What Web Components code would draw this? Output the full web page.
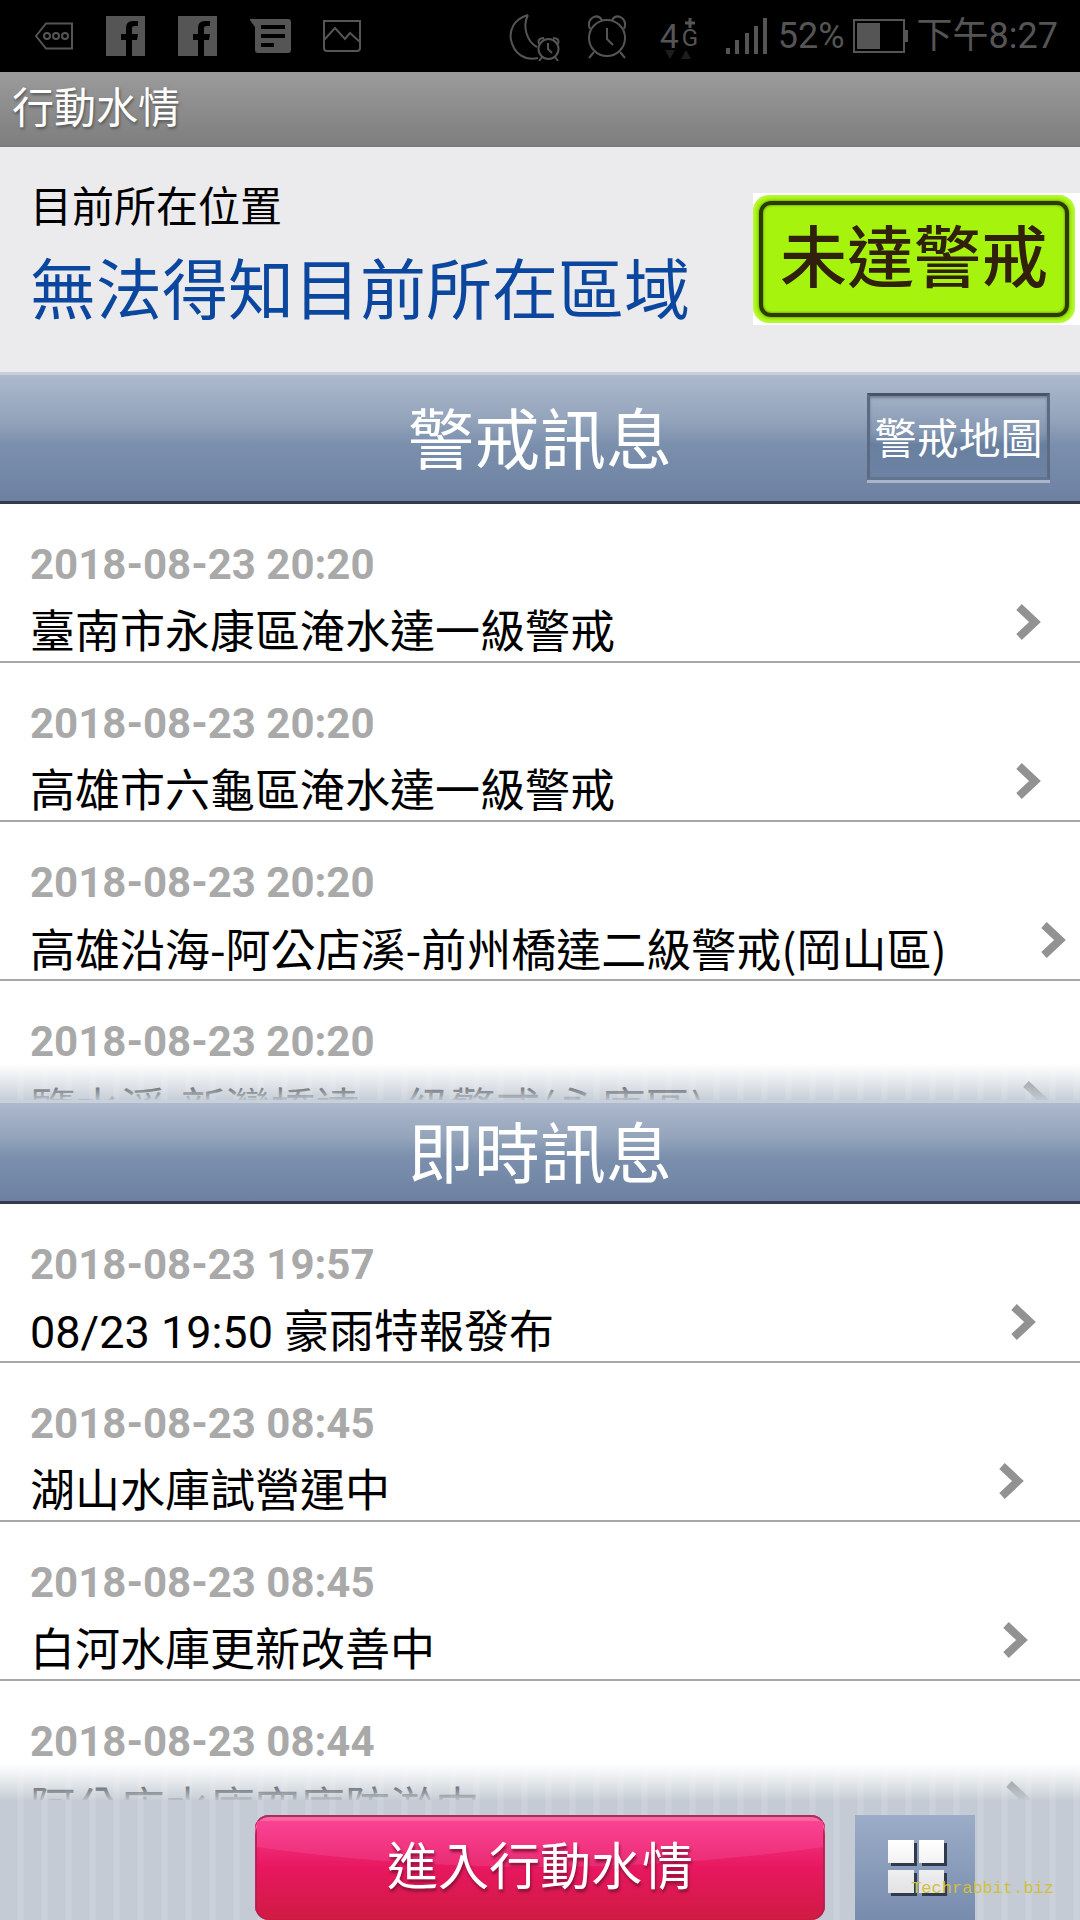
<!DOCTYPE html>
<html lang="zh-Hant">
<head>
<meta charset="utf-8">
<meta name="viewport" content="width=device-width, initial-scale=1">
<title>行動水情</title>
<style>
  html, body { margin: 0; height: 100%; }
  body {
    font-family: Roboto, "Noto Sans CJK TC", sans-serif;
    color: #000;
    background: #fff;
    --pad: 30px;
    --stripes: repeating-linear-gradient(90deg, #c4cbd4 0 17px, #cad1d9 18px 23px, #c4cbd4 24px);
  }
</style>
</head>
<body>
<water-app>
  <phone-status slot="status"></phone-status>
  <app-title slot="title">行動水情</app-title>
  <location-panel slot="location">
    <span slot="label">目前所在位置</span>
    <span slot="area">無法得知目前所在區域</span>
    <alert-badge slot="badge">未達警戒</alert-badge>
  </location-panel>

  <news-section>
    <section-bar slot="bar" tall>警戒訊息<map-button slot="action">警戒地圖</map-button></section-bar>
    <news-item time="2018-08-23 20:20">臺南市永康區淹水達一級警戒</news-item>
    <news-item time="2018-08-23 20:20">高雄市六龜區淹水達一級警戒</news-item>
    <news-item time="2018-08-23 20:20" cjk>高雄沿海-阿公店溪-前州橋達二級警戒(岡山區)</news-item>
    <news-item time="2018-08-23 20:20" cjk>鹽水溪-新灣橋達一級警戒(永康區)</news-item>
  </news-section>

  <news-section>
    <section-bar slot="bar">即時訊息</section-bar>
    <news-item time="2018-08-23 19:57">08/23 19:50 豪雨特報發布</news-item>
    <news-item time="2018-08-23 08:45">湖山水庫試營運中</news-item>
    <news-item time="2018-08-23 08:45">白河水庫更新改善中</news-item>
    <news-item time="2018-08-23 08:44">阿公店水庫空庫防淤中</news-item>
  </news-section>

  <app-footer slot="footer">進入行動水情<span slot="mark">Techrabbit.biz</span></app-footer>
</water-app>

<script>
const define = (name, html, setup) => {
  const template = document.createElement('template');
  template.innerHTML = html;
  customElements.define(name, class extends HTMLElement {
    constructor() {
      super();
      this.attachShadow({ mode: 'open' }).append(template.content.cloneNode(true));
    }
    connectedCallback() { if (setup) setup(this, this.shadowRoot); }
  });
};

define('water-app', `
  <style>
    :host { display: flex; flex-direction: column; height: 100vh; overflow: hidden; }
    main { flex: 1; min-height: 0; display: flex; flex-direction: column; }
  </style>
  <slot name="status"></slot>
  <slot name="title"></slot>
  <slot name="location"></slot>
  <main><slot></slot></main>
  <slot name="footer"></slot>
`);

define('phone-status', `
  <style>
    :host {
      display: flex; justify-content: space-between; align-items: center;
      height: 72px; padding: 0 22px 0 34px; box-sizing: border-box;
      background: #000; color: #555; font-size: 36px; line-height: 76px; font-weight: 400;
    }
    div { display: flex; align-items: center; }
    .left { gap: 32px; }
    .right { gap: 8px; }
    svg { display: block; fill: none; stroke: #555; stroke-width: 2; }
    .solid { fill: #555; stroke: none; }
    .moon { margin-right: 18px; }
    .alarm { margin-right: 25px; }
    .signal { margin-right: 2px; }
    .net { position: relative; width: 48px; height: 72px; font-size: 34px; margin-right: 10px; }
    .net b { font-size: 24px; font-weight: 400; margin-left: 3px; padding-top: 4px; }
    .net svg { position: absolute; left: 0; top: 0; }
  </style>
  <div class="left">
    <svg width="40" height="40" viewBox="0 0 40 40"><path d="M2 20 12 7.500H38V32.500H12Z"/><circle cx="13" cy="20" r="3"/><circle cx="22" cy="20" r="3"/><circle cx="31" cy="20" r="3"/></svg>
    <svg class="solid" width="40" height="40" viewBox="0 0 40 40"><path d="M0 0H39V40H26V24H31L32 18H26V12Q26 10 29 10H32V5H27Q20 5 20 12V18H15V24H20V40H0Z"/></svg>
    <svg class="solid" width="40" height="40" viewBox="0 0 40 40"><path d="M0 0H39V40H26V24H31L32 18H26V12Q26 10 29 10H32V5H27Q20 5 20 12V18H15V24H20V40H0Z"/></svg>
    <svg class="solid" width="42" height="40" viewBox="1 0 42 40"><path fill-rule="evenodd" d="M0 3H39Q42 3 42 6V34Q42 37 39 37H9Q6 37 6 34V11ZM12 9V13H36V9ZM12 18V22H36V18ZM12 27V31H25V27Z"/></svg>
    <svg width="40" height="40" viewBox="2 0 40 40" overflow="visible"><path d="M2 5H38V32Q38 35 35 35H5Q2 35 2 32ZM2 24 13 12 23 23 28 17 38 26"/></svg>
  </div>
  <div class="right">
    <svg class="moon" width="52" height="50" viewBox="0 0 52 50"><path d="M19 4C5 8 0 19 2 29 5 43 16 50 29 47M19 4C13 15 18 31 28 36"/><circle cx="39.500" cy="38" r="10"/><path d="M30 33Q28 27 35 27M49 33Q51 27 44 27M39 32V38L43 42M33 46 30 50M46 46 49 50"/></svg>
    <svg class="alarm" width="40" height="46" viewBox="0 0 40 46"><circle cx="20" cy="25" r="18"/><path d="M3 16Q0 9 5 5 11 1 15 7M37 16Q40 9 35 5 29 1 25 7M20 15V26L26 32M7 39 2 45M33 39 38 45"/></svg>
    <div class="net"><span>4</span><b>G</b><svg width="48" height="72" viewBox="0 0 48 72"><path d="M30 18V28M25 23H35" stroke-width="3"/><path d="M5 50H15L10 59ZM21 59 26 50 31 59Z" fill="#1d1d1d" stroke="none"/></svg></div>
    <svg class="signal solid" width="42" height="36" viewBox="0 0 42 36"><path d="M0 30H4V36H0ZM9 22H13V36H9ZM19 15H23V36H19ZM28 8H32V36H28ZM37 0H41V36H37Z"/></svg>
    <span>52%</span>
    <svg width="56" height="36" viewBox="0 0 56 36"><path d="M1 2H51V34H1Z"/><path class="solid" d="M4 5H27V31H4ZM52 12H55V24H52Z"/></svg>
    <span>下午8:27</span>
  </div>
`);

define('app-title', `
  <style>
    :host {
      display: block; padding: 0 12px; background: linear-gradient(#9b9b9b, #7e7e7e);
      border-bottom: 1px solid #777; color: #fff;
    }
    h1 { margin: 0; font-size: 42px; line-height: 74px; font-weight: 400; text-shadow: 1px 2px 3px #555; }
  </style>
  <h1><slot></slot></h1>
`);

define('location-panel', `
  <style>
    :host {
      display: flex; justify-content: space-between; align-items: flex-start;
      padding: 31px 0 26px var(--pad); background: #ebebed;
    }
    .label { font-size: 42px; line-height: 60px; }
    .area { font-size: 66px; line-height: 108px; color: #0b469f; white-space: nowrap; }
    .badge { padding-top: 15px; }
  </style>
  <div>
    <div class="label"><slot name="label"></slot></div>
    <div class="area"><slot name="area"></slot></div>
  </div>
  <div class="badge"><slot name="badge"></slot></div>
`);

define('alert-badge', `
  <style>
    :host { display: block; background: #fff; padding: 2px 5px 2px 0; }
    .plate { background: #a6f40e; border-radius: 16px; padding: 6px; box-shadow: inset 0 0 4px #d4fa8a; }
    .frame {
      border: 4px solid #2c3a04; border-radius: 12px; padding: 0 17px;
      font-size: 67px; line-height: 108px; font-weight: 500; color: #30200c; white-space: nowrap;
      box-shadow: 0 0 3px #557a08, inset 0 0 3px #557a08;
    }
  </style>
  <div class="plate"><div class="frame"><slot></slot></div></div>
`);

define('section-bar', `
  <style>
    :host {
      display: grid; grid-template-columns: 1fr auto 1fr; align-items: center;
      height: 104px; box-sizing: border-box; padding: 0 var(--pad);
      border-top: 3px solid #c8d0dc; border-bottom: 3px solid #343a4d;
      background: linear-gradient(#adb9cd, #94a4bb 35%, #7b90ad 55%, #6d80a2); color: #fff;
    }
    :host([tall]) { height: 132px; }
    h2 { grid-column: 2; margin: 0; padding-top: 8px; font-size: 66px; line-height: 90px; font-weight: 400; }
    .action { justify-self: end; }
  </style>
  <h2><slot></slot></h2>
  <div class="action"><slot name="action"></slot></div>
`);

define('map-button', `
  <style>
    :host { display: block; padding-bottom: 4px; }
    button {
      display: block; margin: 0; padding: 6px 4px 0; font: inherit; font-size: 42px; line-height: 75px; color: #fff;
      background: linear-gradient(#a3b1c5, #8497b2 45%, #68809f 60%, #6d82a5);
      border: 3px solid #5c6b82; border-top-color: #485467; border-bottom-color: #64758f;
      box-shadow: 0 3px 0 #a9b6ca, inset 0 2px 3px #71809a; white-space: nowrap; width: 183px;
    }
  </style>
  <button type="button"><slot></slot></button>
`);

define('news-section', `
  <style>
    :host { flex: 1 1 auto; display: flex; flex-direction: column; min-height: 0; }
    .list { flex: 1 1 0; min-height: 0; overflow: hidden; position: relative; background: #fff; }
    .fade {
      position: absolute; left: 0; right: 0; bottom: 0; height: 36px; pointer-events: none;
      background: var(--stripes);
      -webkit-mask-image: linear-gradient(transparent, rgba(0,0,0,.55) 60%, rgba(0,0,0,.95));
      mask-image: linear-gradient(transparent, rgba(0,0,0,.55) 60%, rgba(0,0,0,.95));
    }
  </style>
  <slot name="bar"></slot>
  <div class="list">
    <div role="list"><slot></slot></div>
    <div class="fade"></div>
  </div>
`);

define('news-item', `
  <style>
    :host { display: block; border-bottom: 2px solid #a8a8a8; }
    a {
      display: block; height: 157px; box-sizing: border-box;
      padding: 36px 6px 0 var(--pad); color: inherit; text-decoration: none;
    }
    time { display: block; font-size: 42px; line-height: 50px; font-weight: 700; color: #a9a9a9; }
    .row { display: flex; height: 71px; }
    .text { flex: 25 0 auto; font-size: 45px; line-height: 86px; white-space: nowrap; }
    :host([cjk]) .text { font-family: "Noto Sans CJK TC", sans-serif; line-height: 80px; }
    .go { flex: 2 0 auto; padding-top: 13px; }
    svg { display: block; }
  </style>
  <a href="#">
    <time></time>
    <div class="row">
      <span class="text"><slot></slot></span>
      <span class="go"><svg width="27" height="38" viewBox="0 0 27 38"><path d="M4 4 20 19 4 34" fill="none" stroke="#929292" stroke-width="8"/></svg></span>
    </div>
  </a>
`, (host, root) => {
  host.setAttribute('role', 'listitem');
  root.querySelector('time').textContent = host.getAttribute('time');
});

define('app-footer', `
  <style>
    :host {
      display: grid; grid-template-columns: 1fr 570px 1fr; position: relative;
      padding-top: 15px; background: var(--stripes);
    }
    button { display: block; margin: 0; padding: 0; border: 0; height: 105px; font: inherit; color: #fff; }
    .enter {
      grid-column: 2; border-radius: 14px; font-size: 51px; line-height: 105px; text-shadow: 1px 3px 3px #8a1238;
      background: linear-gradient(#f9408f, #e81760 50%, #cf1b42);
      box-shadow: inset 0 2px 0 #a52f5c, inset 0 6px 1px #f9689f, inset 2px 0 1px #b81f50, inset -2px 0 1px #b81f50;
      position: relative; overflow: hidden;
    }
    .shine { position: absolute; inset: 6px 2px auto 2px; width: calc(100% - 4px); height: 46px; }
    .label { position: relative; }
    .grid {
      justify-self: start; margin-left: 30px; width: 120px;
      background: linear-gradient(#9badc7, #778bad);
    }
    .grid svg { display: block; margin: 0 auto; }
    .mark {
      position: absolute; right: 26px; bottom: 21px; color: #d2c03c;
      font-family: "Liberation Mono", monospace; font-size: 17px; line-height: 20px;
    }
  </style>
  <button class="enter" type="button">
    <svg class="shine" viewBox="0 0 566 46" preserveAspectRatio="none">
      <defs><linearGradient id="g" x2="0" y2="1"><stop stop-color="#fa4293"/><stop offset="1" stop-color="#ea2b73"/></linearGradient></defs>
      <path d="M0 0H566V26Q283 66 0 26Z" fill="url(#g)"/>
    </svg>
    <span class="label"><slot></slot></span>
  </button>
  <button class="grid" type="button" aria-label="選單">
    <svg width="70" height="60" viewBox="-6 0 70 60">
      <defs><linearGradient id="w" x2="0" y2="1"><stop stop-color="#fff"/><stop offset="1" stop-color="#e2e2e4"/></linearGradient></defs>
      <path fill="#2f3b4d" d="M5 5H31V28H5ZM36 5H61V28H36ZM5 35H31V58H5ZM36 35H61V58H36Z"/>
      <path fill="url(#w)" d="M2 2H28V25H2ZM33 2H58V25H33ZM2 32H28V55H2ZM33 32H58V55H33Z"/>
    </svg>
  </button>
  <span class="mark"><slot name="mark"></slot></span>
`);
</script>
</body>
</html>
